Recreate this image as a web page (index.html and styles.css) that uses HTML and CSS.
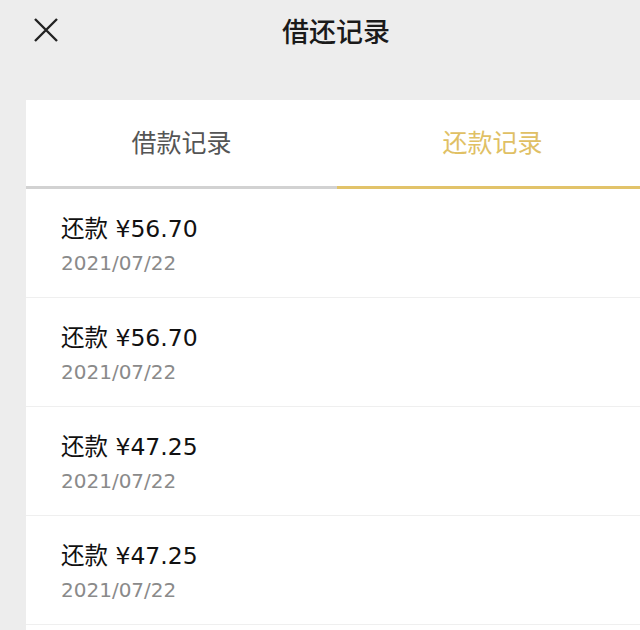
FILE: index.html
```html
<!DOCTYPE html>
<html lang="zh-CN">
<head>
    <meta charset="UTF-8">
    <meta name="viewport" content="width=device-width, initial-scale=1.0">
    <title>借还记录</title>
    <link rel="stylesheet" href="styles.css">
</head>
<body>
    <div class="topbar">
        <span class="close">
            <svg width="24" height="24" viewBox="0 0 24 24"><path d="M1 1 L23 23 M23 1 L1 23" stroke="#222" stroke-width="2.4" fill="none"/></svg>
        </span>
        <h1>借还记录</h1>
    </div>

    <div class="card">
        <div class="tabs">
            <div class="tab">借款记录</div>
            <div class="tab active">还款记录</div>
        </div>
        <ul class="records">
            <li class="record">
                <div class="amount">还款 ¥56.70</div>
                <div class="date">2021/07/22</div>
            </li>
            <li class="record">
                <div class="amount">还款 ¥56.70</div>
                <div class="date">2021/07/22</div>
            </li>
            <li class="record">
                <div class="amount">还款 ¥47.25</div>
                <div class="date">2021/07/22</div>
            </li>
            <li class="record">
                <div class="amount">还款 ¥47.25</div>
                <div class="date">2021/07/22</div>
            </li>
        </ul>
    </div>
</body>
</html>
```

FILE: styles.css
```css
body {
    margin: 0;
    padding: 0;
    background: #ededed;
    font-family: "DejaVu Sans", "Noto Sans CJK SC", sans-serif;
    overflow: hidden;
    height: 630px;
}
.topbar {
    height: 60px;
    padding-left: 32px;
    display: flex;
    align-items: center;
    justify-content: center;
    position: relative;
}
.close {
    position: absolute;
    left: 34px;
    top: 18px;
    width: 24px;
    height: 24px;
}
.topbar h1 {
    margin: 0;
    font-size: 27px;
    font-weight: 500;
    color: #1a1a1a;
    font-family: "Noto Sans CJK SC", sans-serif;
}
.card {
    margin-top: 40px;
    margin-left: 26px;
    width: 622px;
    min-height: 560px;
    background: #fff;
}
.tabs {
    display: flex;
    height: 89px;
}
.tab {
    flex: 1;
    height: 89px;
    padding-bottom: 4px;
    box-sizing: border-box;
    display: flex;
    align-items: center;
    justify-content: center;
    font-size: 25px;
    color: #555;
    border-bottom: 3px solid #d2d2d2;
    font-family: "Noto Sans CJK SC", sans-serif;
}
.tab.active {
    color: #e0c064;
    border-bottom-color: #e2c36a;
}
.records {
    list-style: none;
    margin: 0;
    padding: 0;
}
.record {
    height: 109px;
    padding-left: 35px;
    padding-top: 6px;
    border-bottom: 1px solid #efefef;
    display: flex;
    flex-direction: column;
    justify-content: center;
    box-sizing: border-box;
}
.amount {
    font-size: 23.5px;
    color: #111;
    line-height: 34px;
}
.date {
    font-size: 20px;
    color: #8a8a8a;
    line-height: 34px;
}
```
